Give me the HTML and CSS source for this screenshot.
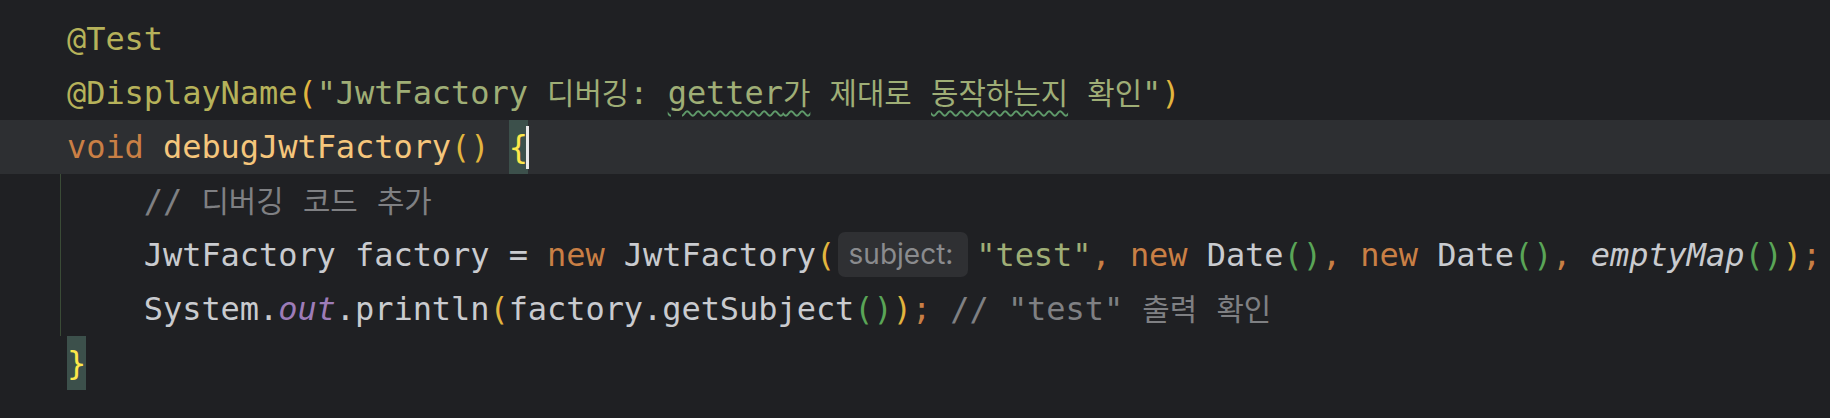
FILE: index.html
```html
<!DOCTYPE html>
<html lang="ko">
<head>
<meta charset="utf-8">
<title>JwtFactory test</title>
<link rel="stylesheet" href="styles.css">
</head>
<body>
<div class="editor">
  <div class="line"><span class="ann">@Test</span></div>
  <div class="line"><span class="ann">@DisplayName</span><span class="b1">(</span><span class="str">"JwtFactory <span class="ko">디버깅</span>: <span class="typo">getter<span class="ko">가</span></span> <span class="ko">제대로</span> <span class="typo"><span class="ko">동작하는지</span></span> <span class="ko">확인</span>"</span><span class="b1">)</span></div>
  <div class="line current"><span class="kw">void</span> <span class="fn">debugJwtFactory</span><span class="b1">()</span> <span class="brace">{</span><span class="caret"></span></div>
  <div class="body">
    <div class="line">    <span class="cm">// <span class="ko">디버깅</span> <span class="ko">코드</span> <span class="ko">추가</span></span></div>
    <div class="line">    JwtFactory factory = <span class="kw">new</span> JwtFactory<span class="b1">(</span><span class="hint">subject:</span><span class="str">"test"</span><span class="kw">,</span> <span class="kw">new</span> Date<span class="b2">()</span><span class="kw">,</span> <span class="kw">new</span> Date<span class="b2">()</span><span class="kw">,</span> <span class="it">emptyMap</span><span class="b2">()</span><span class="b1">)</span><span class="kw">;</span></div>
    <div class="line">    System.<span class="field">out</span>.println<span class="b1">(</span>factory.getSubject<span class="b2">()</span><span class="b1">)</span><span class="kw">;</span> <span class="cm">// "test" <span class="ko">출력</span> <span class="ko">확인</span></span></div>
  </div>
  <div class="line"><span class="brace">}</span></div>
</div>
</body>
</html>
```

FILE: styles.css
```css
html, body {
  margin: 0;
  padding: 0;
  background: #1f2023;
  overflow: hidden;
}

.editor {
  width: 1830px;
  height: 418px;
  box-sizing: border-box;
  padding-top: 12px;
  font-family: "DejaVu Sans Mono", "Liberation Mono", monospace;
  font-size: 32px;
  letter-spacing: -0.064px;
  color: #c9cbcf;
}

.line {
  height: 54px;
  line-height: 54px;
  padding-left: 67px;
  white-space: pre;
}

.current {
  background: #2d2f32;
}

.body {
  margin-left: 60px;
  border-left: 1px solid #3a4b36;
}

.body .line {
  padding-left: 6px;
}

.ko {
  font-family: "Noto Sans CJK KR", sans-serif;
  font-size: 29.8px;
  line-height: 1;
  letter-spacing: 0;
}

.ann { color: #b6b25a; }
.str { color: #9fae76; }
.kw { color: #c97f45; }
.fn { color: #f5c67c; }
.cm { color: #7f8083; }
.field { color: #9d7cb8; font-style: italic; }
.it { font-style: italic; }
.b1 { color: #e2b53e; }
.b2 { color: #5aa557; }

.typo {
  text-decoration: underline wavy #5f9a6a;
  text-decoration-thickness: 1.5px;
  text-underline-offset: 6px;
}

.brace {
  display: inline-block;
  vertical-align: top;
  height: 54px;
  line-height: 54px;
  background: #3c504b;
  color: #fde84a;
}

.caret {
  display: inline-block;
  vertical-align: top;
  width: 3px;
  height: 43px;
  margin-top: 6px;
  margin-left: -1.5px;
  background: #e8e8e8;
}

.hint {
  display: inline-block;
  vertical-align: top;
  box-sizing: border-box;
  width: 130px;
  height: 45px;
  margin: 4px 8.7px 0 2.5px;
  padding-left: 11px;
  border-radius: 7px;
  background: #2f3033;
  color: #8a8b8e;
  font-family: Inter, "Noto Sans", sans-serif;
  font-size: 28px;
  letter-spacing: 0;
  line-height: 45px;
}
```
